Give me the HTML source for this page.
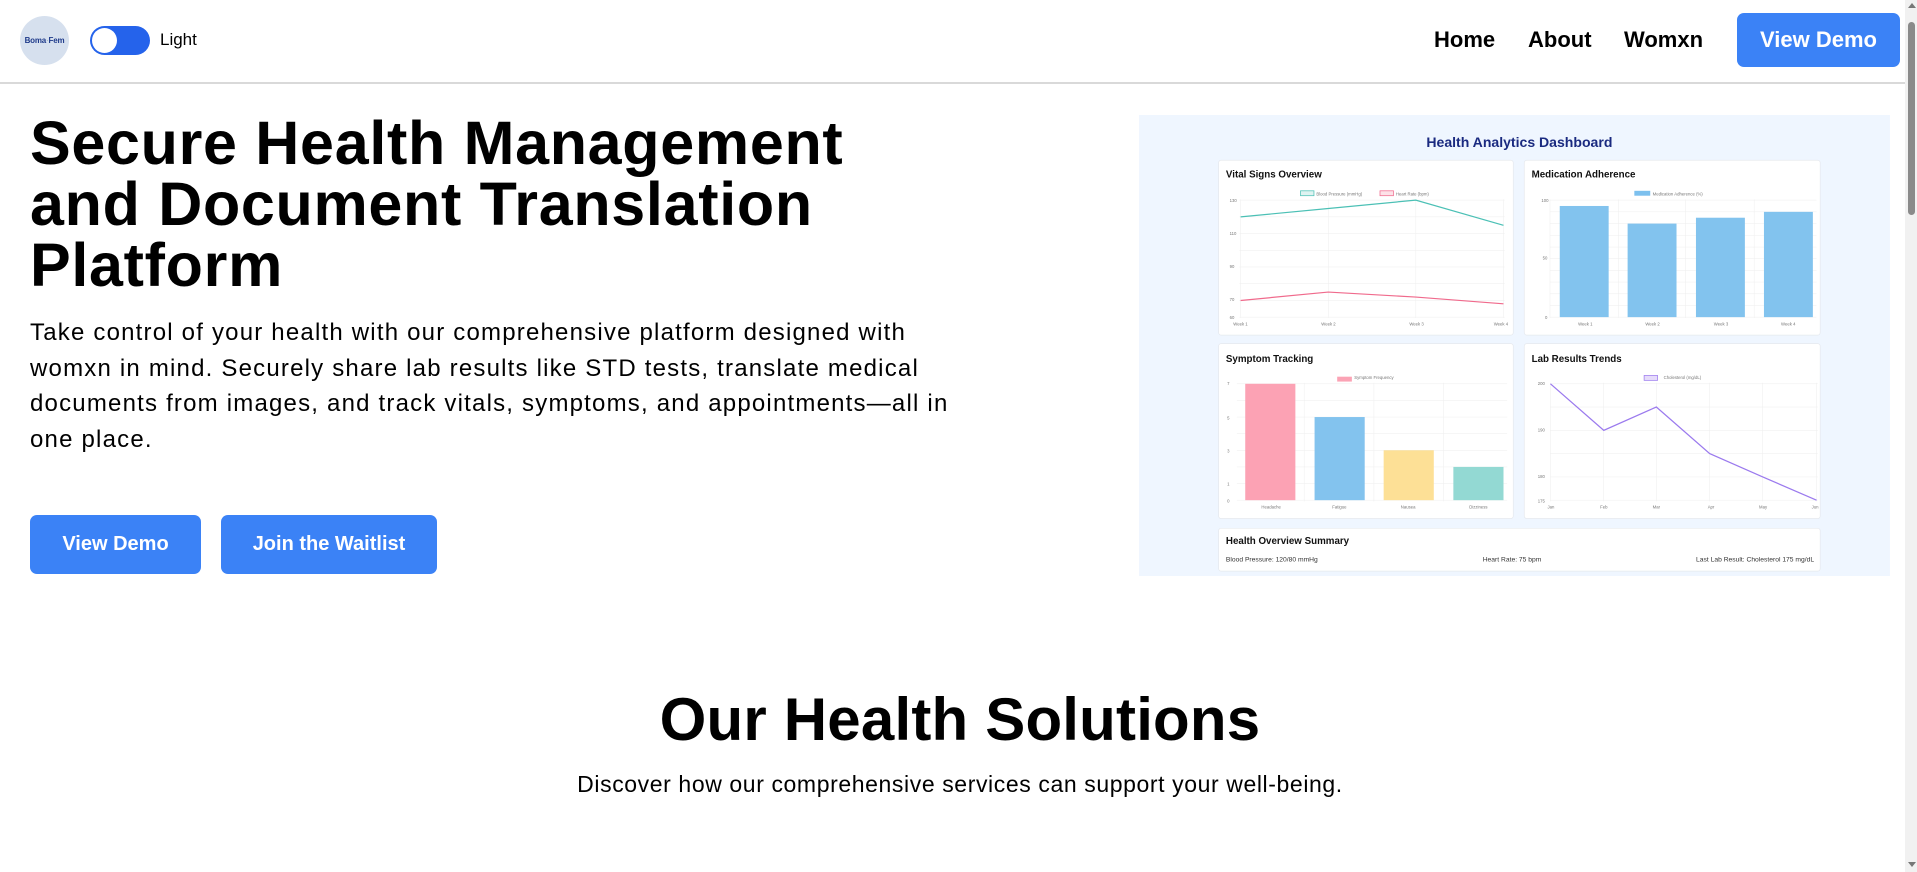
<!DOCTYPE html>
<html><head><meta charset="utf-8"><style>
*{margin:0;padding:0;box-sizing:border-box}
body{width:1917px;height:872px;overflow:hidden;background:#fff;font-family:"Liberation Sans",Arial,sans-serif;color:#000;position:relative}
.a{position:absolute}
.nav{left:0;top:0;width:1905px;height:84px;border-bottom:2px solid #d9d9d9}
.logo{left:20px;top:16px;width:49px;height:49px;border-radius:50%;background:#d6e0ee;font-size:8px;font-weight:bold;color:#1e3a8a;text-align:center;line-height:49px;letter-spacing:-.2px}
.tog{left:90px;top:26px;width:60px;height:29px;border-radius:15px;background:#2563eb}
.knob{left:92px;top:28px;width:25px;height:25px;border-radius:50%;background:#fff}
.lnk{top:27px;font-size:22px;font-weight:bold}
.btn{background:#3b82f6;color:#fff;font-weight:bold;border-radius:7px;text-align:center}
h1{position:absolute;left:30px;top:113px;font-size:61px;line-height:61px;font-weight:bold;letter-spacing:.7px}
p.d{position:absolute;left:30px;top:315px;font-size:24px;line-height:35.5px;letter-spacing:1.2px}
.sb{left:1905px;top:0;width:12px;height:872px;background:#f1f1f1}
.th{left:1908px;top:22px;width:7px;height:193px;background:#8a8a8a;border-radius:4px}
</style></head><body>
<div class="a nav"></div>
<div class="a logo">Boma<span style="color:#9aa;font-weight:normal">·</span>Fem</div>
<div class="a tog"></div><div class="a knob"></div>
<div class="a" style="left:160px;top:30px;font-size:17px">Light</div>
<div class="a lnk" style="left:1434px">Home</div>
<div class="a lnk" style="left:1528px">About</div>
<div class="a lnk" style="left:1624px">Womxn</div>
<div class="a btn" style="left:1737px;top:13px;width:163px;height:54px;line-height:54px;font-size:22px">View Demo</div>
<div class="a sb"></div><div class="a th"></div>
<div class="a" style="left:1908px;top:3px;width:0;height:0;border-left:4px solid transparent;border-right:4px solid transparent;border-bottom:5px solid #777"></div>
<div class="a" style="left:1908px;top:862px;width:0;height:0;border-left:4px solid transparent;border-right:4px solid transparent;border-top:5px solid #777"></div>

<h1>Secure Health Management<br>and Document Translation<br>Platform</h1>
<p class="d">Take control of your health with our comprehensive platform designed with<br>womxn in mind. Securely share lab results like STD tests, translate medical<br>documents from images, and track vitals, symptoms, and appointments—all in<br>one place.</p>
<div class="a btn" style="left:30px;top:515px;width:171px;height:59px;line-height:59px;font-size:20px">View Demo</div>
<div class="a btn" style="left:221px;top:515px;width:216px;height:59px;line-height:59px;font-size:20px">Join the Waitlist</div>

<div class="a" style="left:0;top:685px;width:1920px;text-align:center;font-size:60px;font-weight:bold;letter-spacing:.2px">Our Health Solutions</div>
<div class="a" style="left:0;top:771px;width:1920px;text-align:center;font-size:23px;letter-spacing:.6px">Discover how our comprehensive services can support your well-being.</div>

<svg class="a" style="left:1139px;top:115px" width="751" height="461" viewBox="932 94 614 377" font-family="Liberation Sans,sans-serif">
<rect x="932" y="94" width="614" height="377" fill="#eff6ff"/>
<text x="1243" y="120" text-anchor="middle" font-size="11.5" font-weight="bold" fill="#1a2a80">Health Analytics Dashboard</text>
<g fill="#fff" stroke="#e6e9ee" stroke-width=".6">
<rect x="997" y="131" width="241" height="143" rx="2"/>
<rect x="1247" y="131" width="242" height="143" rx="2"/>
<rect x="997" y="281" width="241" height="143" rx="2"/>
<rect x="1247" y="281" width="242" height="143" rx="2"/>
<rect x="997" y="432" width="492" height="35" rx="2"/>
</g>
<g font-size="8" font-weight="bold" fill="#111">
<text x="1003" y="145">Vital Signs Overview</text>
<text x="1253" y="145">Medication Adherence</text>
<text x="1003" y="296">Symptom Tracking</text>
<text x="1253" y="296">Lab Results Trends</text>
<text x="1003" y="445">Health Overview Summary</text>
</g>
<g font-size="5.5" fill="#333">
<text x="1003" y="459">Blood Pressure: 120/80 mmHg</text>
<text x="1213" y="459">Heart Rate: 75 bpm</text>
<text x="1484" y="459" text-anchor="end">Last Lab Result: Cholesterol 175 mg/dL</text>
</g>
<g stroke="#eee" stroke-width=".4">
<path d="M1014 163.6H1231M1014 177.3H1231M1014 191H1231M1014 204.6H1231M1014 218.3H1231M1014 232H1231M1014 245.7H1231M1014 259.3H1231M1015 163V260M1086.7 163V260M1158.3 163V260M1230 163V260"/>
<path d="M1268 163.6H1486M1268 173.2H1486M1268 182.7H1486M1268 192.4H1486M1268 202H1486M1268 211.5H1486M1268 221H1486M1268 230.6H1486M1268 240.2H1486M1268 249.8H1486M1268 259.3H1486M1268 163V260M1324 163V260M1379 163V260M1435 163V260"/>
<path d="M1012 313.8H1233M1012 327.4H1233M1012 341H1233M1012 354.6H1233M1012 368.2H1233M1012 381.8H1233M1012 395.4H1233M1012 409H1233M1067 313V410M1124 313V410M1181 313V410"/>
<path d="M1268 313.8H1487M1268 332.8H1487M1268 351.9H1487M1268 370.9H1487M1268 390H1487M1268 409H1487M1268.4 313V410M1312 313V410M1355 313V410M1398.6 313V410M1442 313V410M1486 313V410"/>
</g>
<g font-size="3.5" fill="#777">
<text x="1006" y="165">130</text><text x="1006" y="192">110</text><text x="1006" y="219">90</text><text x="1006" y="246">70</text><text x="1006" y="261">60</text>
<text x="1009" y="266">Week 1</text><text x="1081" y="266">Week 2</text><text x="1153" y="266">Week 3</text><text x="1222" y="266">Week 4</text>
<text x="1261" y="165">100</text><text x="1262" y="212">50</text><text x="1264" y="261">0</text>
<text x="1291" y="266">Week 1</text><text x="1346" y="266">Week 2</text><text x="1402" y="266">Week 3</text><text x="1457" y="266">Week 4</text>
<text x="1004" y="315">7</text><text x="1004" y="343">5</text><text x="1004" y="370">3</text><text x="1004" y="397">1</text><text x="1004" y="411">0</text>
<text x="1032" y="416">Headache</text><text x="1090" y="416">Fatigue</text><text x="1146" y="416">Nausea</text><text x="1202" y="416">Dizziness</text>
<text x="1258" y="315">200</text><text x="1258" y="353">190</text><text x="1258" y="391">180</text><text x="1258" y="411">175</text>
<text x="1266" y="416">Jan</text><text x="1309" y="416">Feb</text><text x="1352" y="416">Mar</text><text x="1397" y="416">Apr</text><text x="1439" y="416">May</text><text x="1482" y="416">Jun</text>
<text x="1077" y="160">Blood Pressure (mmHg)</text><text x="1142" y="160">Heart Rate (bpm)</text>
<text x="1352" y="160">Medication Adherence (%)</text>
<text x="1108" y="310">Symptom Frequency</text>
<text x="1361" y="310">Cholesterol (mg/dL)</text>
</g>
<rect x="1064" y="156" width="11" height="4" fill="#dff3f1" stroke="#4bc0b5" stroke-width=".6"/>
<rect x="1129" y="156" width="11" height="4" fill="#fde2e8" stroke="#f06a8c" stroke-width=".6"/>
<rect x="1337" y="156" width="13" height="4" fill="#7cc0ee"/>
<rect x="1094" y="308" width="12" height="4" fill="#fba3b5"/>
<rect x="1345" y="307" width="11" height="4" fill="#e6dbfb" stroke="#9b7aee" stroke-width=".6"/>
<polyline points="1015,177.3 1086.7,170.5 1158.3,163.6 1230,184.2" fill="none" stroke="#4bc0b5" stroke-width="1"/>
<polyline points="1015,245.7 1086.7,238.8 1158.3,242.9 1230,248.4" fill="none" stroke="#f06a8c" stroke-width="1"/>
<g fill="#82c3ee">
<rect x="1276" y="168.4" width="40" height="90.9"/>
<rect x="1331.5" y="182.8" width="40" height="76.5"/>
<rect x="1387.4" y="178" width="40" height="81.3"/>
<rect x="1443" y="173.2" width="40" height="86.1"/>
</g>
<rect x="1018.8" y="313.8" width="41" height="95.2" fill="#fca2b4"/>
<rect x="1075.5" y="341" width="41" height="68" fill="#83c3ee"/>
<rect x="1132" y="368.2" width="41" height="40.8" fill="#fde096"/>
<rect x="1189" y="381.8" width="41" height="27.2" fill="#93d9d3"/>
<polyline points="1268.4,313.8 1312,351.9 1355,332.8 1398.6,370.9 1442,390 1486,409" fill="none" stroke="#9b7aee" stroke-width="1"/>
</svg>
</body></html>
